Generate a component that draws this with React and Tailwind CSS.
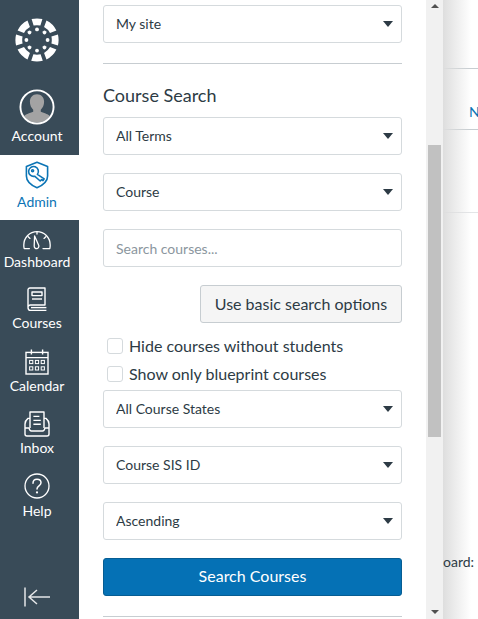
const wedges = [
    { a: 0, o: 5.4, i: 3.4 },
    { a: 45, o: 7, i: 4.2 },
    { a: 90, o: 5.4, i: 3.4 },
    { a: 135, o: 7, i: 4.2 },
    { a: 180, o: 5.8, i: 3.6 },
    { a: 225, o: 7, i: 4.2 },
    { a: 270, o: 5.4, i: 3.4 },
    { a: 315, o: 7, i: 4.2 },
];

const Logo = () => (
    <svg width="44" height="44" viewBox="-22 -22 44 44" fill="#fff">
        {wedges.map((w) => {
            const outer = Math.sqrt(21.6 * 21.6 - w.o * w.o);
            const inner = Math.sqrt(14.8 * 14.8 - w.i * w.i);
            return (
                <path
                    key={w.a}
                    transform={`rotate(${w.a})`}
                    d={`M${-w.o} ${-outer} A21.6 21.6 0 0 1 ${w.o} ${-outer} L${w.i} ${-inner} A14.8 14.8 0 0 0 ${-w.i} ${-inner} Z`}
                />
            );
        })}
        {wedges.map((w) => (
            <circle key={w.a} transform={`rotate(${w.a})`} cx="0" cy="-10.6" r="1.9" />
        ))}
    </svg>
);

const Avatar = () => (
    <svg width="36" height="36" viewBox="0 0 38 38">
        <clipPath id="av"><circle cx="19" cy="19" r="16.5" /></clipPath>
        <circle cx="19" cy="19" r="17.5" fill="#3a4c59" />
        <g clipPath="url(#av)" fill="#a3a3a3">
            <path d="M19 5.5c4.6 0 7.5 3.4 7.5 8 0 3.4-1.3 6.4-3.5 8.3v2.2c3.5 1.5 9 2.6 11 6v8.5H4V30c2-3.4 7.5-4.5 11-6v-2.2c-2.2-1.9-3.5-4.9-3.5-8.3 0-4.6 2.9-8 7.5-8z" />
        </g>
        <circle cx="19" cy="19" r="17.5" fill="none" stroke="#fff" strokeWidth="2" />
    </svg>
);

const AdminIcon = () => (
    <svg width="24" height="28" viewBox="0 0 24 28" fill="none" stroke="#0b74b5" strokeWidth="1.6" strokeLinejoin="round" strokeLinecap="round">
        <path d="M12 1.2 L22.6 5.6 V15 C22.6 20 18 24.2 12 26.8 C6 24.2 1.4 20 1.4 15 V5.6 Z" />
        <path d="M12.4 13.4 A4.9 4.9 0 1 0 9.6 15.2 L15.2 20 L16.6 18.6 L18 19.6 L19.2 17.8 Z" />
        <circle cx="7.6" cy="9.8" r="1" />
    </svg>
);

const DashboardIcon = () => (
    <svg width="28" height="20" viewBox="0 0 28 20" fill="none" stroke="#fff" strokeWidth="1.3" strokeLinecap="round" strokeLinejoin="round">
        <path d="M6.4 18.6 H1.2 C0.9 17.6 0.8 16.4 0.8 15 C0.8 7.6 6.7 1.6 14 1.6 S27.2 7.6 27.2 15 C27.2 16.4 27.1 17.6 26.8 18.6 H20" />
        <path d="M11.6 6 L15.8 15.4 C16.2 17 15.2 18.4 14 18.6 C12.4 18.8 11 17.6 11.2 15.8 Z" />
        <path d="M14 1.6 V4 M5.2 6.8 L7 8.4 M22.8 6.8 L21 8.4" />
    </svg>
);

const CoursesIcon = () => (
    <svg width="20" height="25" viewBox="0 0 20 25" fill="none" stroke="#fff" strokeWidth="1.4" strokeLinejoin="round">
        <path d="M1 20 V3 C1 2 1.6 1 3 1 H18 V18 H3.4 C2 18 1 19 1 20.4 C1 22 2 23.4 3.6 23.4 H19.4" />
        <path d="M4 20.6 H19.4" />
        <rect x="5" y="5" width="10" height="3.6" />
        <path d="M5 12 H15" />
    </svg>
);

const CalendarIcon = () => (
    <svg width="24" height="26" viewBox="0 0 24 26" fill="none" stroke="#fff" strokeWidth="1.4">
        <rect x="1" y="3.4" width="22" height="21.6" />
        <path d="M1 8.6 H23 M6.4 0.6 V5.6 M17.6 0.6 V5.6" />
        <g strokeWidth="1">
            {[4.6, 10.4, 16.2].map((x) => (
                <rect key={x} x={x} y="11.4" width="3.2" height="3.2" />
            ))}
            {[4.6, 10.4, 16.2].map((x) => (
                <rect key={x} x={x} y="17.8" width="3.2" height="3.2" />
            ))}
        </g>
    </svg>
);

const InboxIcon = () => (
    <svg width="26" height="26" viewBox="0 0 26 26" fill="none" stroke="#fff" strokeWidth="1.4" strokeLinejoin="round">
        <path d="M6 17 V1 H20 V17" />
        <path d="M9.4 5.4 H15.4 M9.4 9.4 H16.8 M9.4 13.2 H16.8" />
        <path d="M6 7.4 H4 C2 9 1 11 1 13 V23 C1 24 2 25 3 25 H23 C24 25 25 24 25 23 V13 C25 11 24 9 22 7.4 H20" />
        <path d="M1 17 H5 C5.6 19 6 20 7.4 20 H18.6 C20 20 20.4 19 21 17 H25" />
    </svg>
);

const HelpIcon = () => (
    <svg width="26" height="26" viewBox="0 0 26 26" fill="none" stroke="#fff" strokeWidth="1.3" strokeLinecap="round">
        <circle cx="13" cy="13" r="12" />
        <path d="M9 10.2 C9 7.8 10.8 6.2 13 6.2 C15.4 6.2 17 7.8 17 9.8 C17 12.8 13 13 13 16" strokeWidth="1.5" />
        <circle cx="13" cy="19.4" r="1.1" fill="#fff" stroke="none" />
    </svg>
);

const CollapseIcon = () => (
    <svg width="26" height="20" viewBox="0 0 26 20" fill="none" stroke="#e4e6e8" strokeWidth="1.5">
        <path d="M1 0.5 V19.5 M26 10 H5 M13 3 L5 10 L13 17" />
    </svg>
);

const NavItem = ({ icon, label, active, height = 'h-[62px]', pad = 'pb-3', gap = 'mb-[4px]' }) => (
    <div className={`${height} ${pad} pr-[5px] flex flex-col items-center justify-end ${active ? 'bg-white text-[#0b74b5]' : 'text-white'}`}>
        <div className={gap}>{icon}</div>
        <span className="text-sm leading-4">{label}</span>
    </div>
);

const Arrow = () => (
    <svg className="absolute right-[9px] top-1/2 -translate-y-1/2 pointer-events-none" width="10" height="6" viewBox="0 0 10 6" fill="#2d3b45">
        <path d="M0 0 H10 L5 6 Z" />
    </svg>
);

const Select = ({ value, className = '' }) => (
    <div className={`relative ${className}`}>
        <select
            defaultValue={value}
            className="w-full h-[38px] pl-3 pr-8 appearance-none bg-white border border-[#d5dadd] rounded-[3px] text-sm text-[#2d3b45]"
        >
            <option>{value}</option>
        </select>
        <Arrow />
    </div>
);

const Checkbox = ({ label }) => (
    <label className="h-7 pl-1 flex items-center gap-[6px] text-base text-[#2d3b45]">
        <span className="w-4 h-4 bg-white border border-[#d5dadd] rounded-[3px]" />
        {label}
    </label>
);

const App = () => {
    return (
        <div className="w-[478px] h-[619px] flex overflow-hidden bg-white font-['Lato','Noto_Sans',sans-serif]">
            {/* Global nav */}
            <nav className="w-[79px] shrink-0 flex flex-col bg-[#394b58]">
                <div className="h-[85px] pr-[5px] pt-[18px] flex items-start justify-center">
                    <Logo />
                </div>
                <NavItem icon={<Avatar />} label="Account" height="h-[70px]" pad="pb-[11px]" gap="mb-[3px]" />
                <NavItem icon={<AdminIcon />} label="Admin" active height="h-[65px]" pad="pb-[10px]" gap="mb-[5px]" />
                <NavItem icon={<DashboardIcon />} label="Dashboard" gap="mb-[4px]" />
                <NavItem icon={<CoursesIcon />} label="Courses" height="h-[61px]" gap="mb-[3px]" />
                <NavItem icon={<CalendarIcon />} label="Calendar" height="h-[63px]" gap="mb-[3px]" />
                <NavItem icon={<InboxIcon />} label="Inbox" gap="mb-[3px]" />
                <NavItem icon={<HelpIcon />} label="Help" height="h-[63px]" gap="mb-[4px]" />
                <div className="mt-auto pb-3 pr-[5px] flex justify-center">
                    <CollapseIcon />
                </div>
            </nav>

            {/* Search panel */}
            <div className="w-[347px] shrink-0 px-6 pt-[5px] flex flex-col bg-white">
                <Select value="My site" />
                <hr className="mt-5 border-[#c7cdd1]" />
                <h2 className="mt-5 h-[23px] text-lg leading-[23px] text-[#2d3b45]">Course Search</h2>
                <Select value="All Terms" className="mt-[10px]" />
                <Select value="Course" className="mt-[18px]" />
                <input
                    placeholder="Search courses..."
                    className="mt-[18px] h-[38px] px-3 bg-white border border-[#d5dadd] rounded-[3px] text-sm text-[#2d3b45] placeholder:text-[#8b969e]"
                />
                <div className="mt-[18px] flex justify-end">
                    <button className="w-[202px] h-[38px] bg-[#f5f5f5] border border-[#c7cdd1] rounded-[3px] text-base text-[#2d3b45]">
                        Use basic search options
                    </button>
                </div>
                <div className="mt-[9px] flex flex-col">
                    <Checkbox label="Hide courses without students" />
                    <Checkbox label="Show only blueprint courses" />
                </div>
                <Select value="All Course States" className="mt-[2px]" />
                <Select value="Course SIS ID" className="mt-[18px]" />
                <Select value="Ascending" className="mt-[18px]" />
                <button className="mt-[18px] h-[38px] pb-[2px] shrink-0 bg-[#0571b5] border border-[#065d93] rounded-[3px] text-base text-white">
                    Search Courses
                </button>
                <hr className="mt-5 border-[#c7cdd1]" />
            </div>

            {/* Scrollbar */}
            <div className="w-[17px] shrink-0 flex flex-col items-center bg-[#f1f1f1]">
                <svg className="mt-1 shrink-0" width="8" height="4" viewBox="0 0 8 4" fill="#505050"><path d="M4 0 L8 4 H0 Z" /></svg>
                <div className="mt-[137px] w-[13px] h-[292px] bg-[#c1c1c1]" />
                <svg className="mt-auto mb-[5px] shrink-0" width="8" height="4" viewBox="0 0 8 4" fill="#505050"><path d="M0 0 H8 L4 4 Z" /></svg>
            </div>

            {/* Page behind the tray */}
            <div className="relative flex-1 flex flex-col overflow-hidden">
                <div className="absolute inset-y-0 left-0 w-7 bg-gradient-to-r from-[#dedede] to-transparent" />
                <div className="mt-[68px] h-px bg-[#c7cdd1]" />
                <div className="mt-[33px] h-[20px] pl-[26px] text-sm leading-5 text-[#0b74b5]">N</div>
                <div className="mt-[7px] h-px bg-[#c7cdd1]" />
                <div className="mt-[82px] h-px bg-[#e3e5e7]" />
                <div className="relative mt-[339px] h-5 text-sm leading-5 text-[#2d3b45]">oard:</div>
            </div>
        </div>
    );
};

export default App;
